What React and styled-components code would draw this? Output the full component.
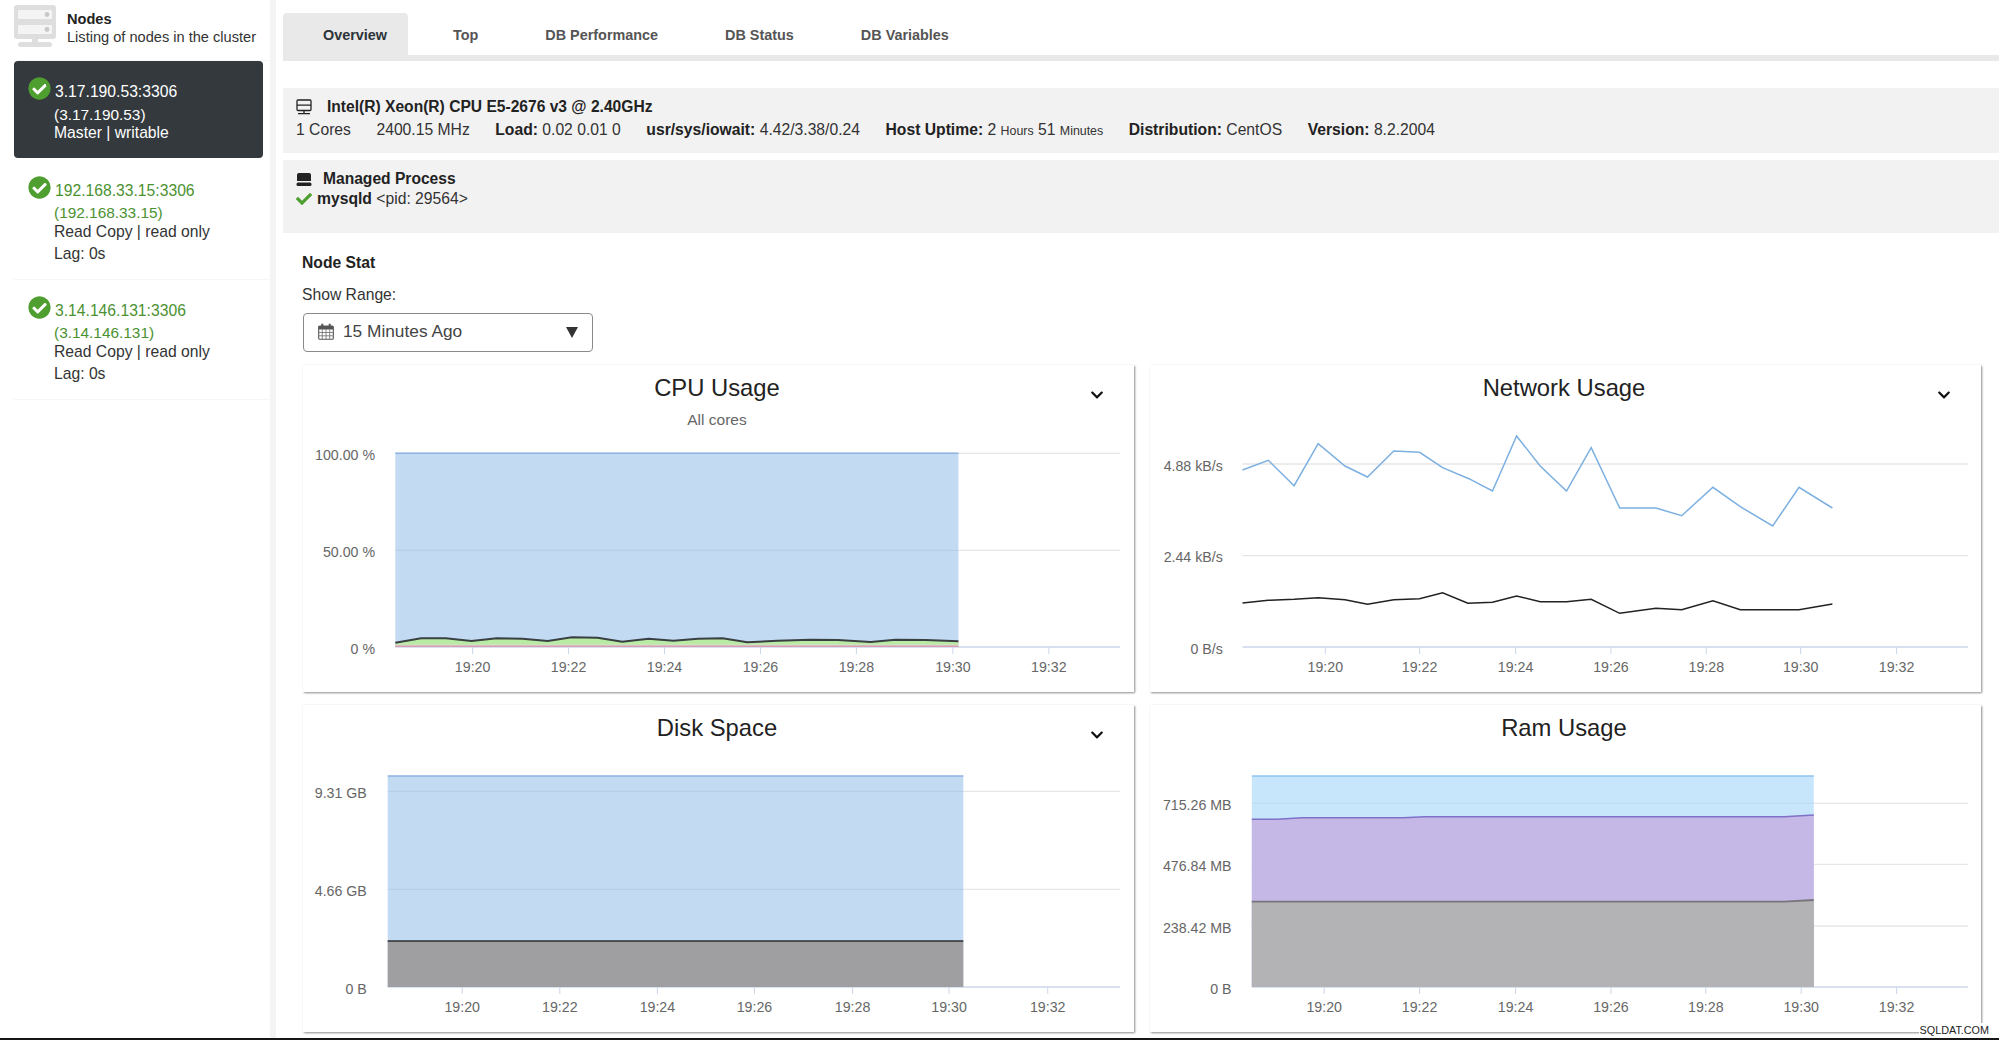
import React from 'react'
import styled, { createGlobalStyle } from 'styled-components'
import { FaCheck, FaCheckCircle, FaChevronDown } from 'react-icons/fa'

const GlobalStyle = createGlobalStyle`
  html, body {
    margin: 0;
    padding: 0;
    background: #fff;
    font-family: "Liberation Sans", Arial, sans-serif;
    color: #222;
  }
  * { box-sizing: border-box; }
`

const Page = styled.div`
  display: flex;
  position: relative;
  width: 1999px;
  height: 1040px;
  overflow: hidden;
  border-bottom: 2px solid #161616;
`

const Sidebar = styled.aside`
  flex: 0 0 276px;
  padding-left: 14px;
  border-right: 6px solid #f4f4f4;
`

const SideHeader = styled.div`
  display: flex;
  gap: 11px;
  height: 61px;
  padding-top: 5px;
  margin-right: -1px;
  border-bottom: 1px solid #f7f7f7;
`

const SideTitle = styled.div`
  padding-top: 5px;
  font-size: 14.6px;
  line-height: 18px;
  color: #333;
  b { display: block; color: #222; font-size: 14.6px; }
`

const Node = styled.div`
  padding: 16px 14px 15px;
  border-bottom: 1px solid #f6f6f6;
  color: #333;
  margin-right: ${p => p.$active ? '7px' : '0'};
  ${p => p.$active && `
    margin-bottom: 2px;
    padding-bottom: 15px;
    background: #33393d;
    border-radius: 4px;
    border-bottom: none;
    color: #fff;
  `}
`

const Address = styled.div`
  display: flex;
  gap: 4px;
  height: 30px;
  line-height: 30px;
  font-size: 15.7px;
  color: ${p => p.$active ? '#fff' : '#4b9231'};
  svg {
    margin-top: 0;
    color: #4f9e30;
    background: radial-gradient(circle, #fff 45%, transparent 48%);
    border-radius: 50%;
  }
`

const Host = styled.div`
  margin-left: 26px;
  font-size: 15.4px;
  line-height: ${p => p.$active ? '16px' : '14px'};
  color: ${p => p.$active ? '#fff' : '#4b9231'};
`

const Role = styled.div`
  margin-left: 26px;
  font-size: 15.7px;
  line-height: ${p => p.$height || '20px'};
`

const Main = styled.main`
  flex: 1;
  min-width: 0;
  padding: 13px 0 0 7px;
`

const TabBar = styled.nav`
  display: flex;
  height: 48px;
  border-bottom: 6px solid #e9e9e9;
`

const Tab = styled.div`
  height: 42px;
  line-height: 44px;
  padding: ${p => p.$active ? '0 21px 0 40px' : '0 22px 0 45px'};
  font-size: 14.4px;
  font-weight: 700;
  color: ${p => p.$active ? '#2c3338' : '#555'};
  background: ${p => p.$active ? '#e9e9e9' : 'transparent'};
  border-radius: 4px 4px 0 0;
`

const Panel = styled.section`
  height: ${p => p.$height};
  margin-top: ${p => p.$top};
  padding: 10px 13px;
  background: #f2f2f2;
  font-size: 15.7px;
  line-height: 18px;
  color: #333;
`

const PanelTitle = styled.div`
  display: flex;
  align-items: center;
  gap: ${p => p.$gap};
  font-weight: 700;
  font-size: 15.6px;
  color: #222;
`

const Facts = styled.div`
  display: flex;
  gap: 25.5px;
  margin-top: 5px;
  white-space: nowrap;
  b { color: #222; }
  small { font-size: 12.4px; }
`

const ProcessRow = styled.div`
  display: flex;
  align-items: center;
  gap: 5px;
  margin-top: 2px;
  b { color: #222; }
  svg { color: #4f9e30; }
`

const Stats = styled.div`
  padding-left: 19px;
`

const StatTitle = styled.div`
  margin-top: 20px;
  font-size: 15.7px;
  font-weight: 700;
  line-height: 20px;
  color: #222;
`

const RangeLabel = styled.div`
  margin-top: 12px;
  font-size: 15.7px;
  line-height: 20px;
  color: #333;
`

const RangeSelect = styled.div`
  display: flex;
  align-items: center;
  gap: 9px;
  width: 290px;
  height: 39px;
  margin: 8px 0 13px 1px;
  padding: 0 14px 2px;
  border: 1px solid #8a8a8a;
  border-radius: 4px;
  font-size: 17.3px;
  color: #444;
`

const Triangle = styled.span`
  margin-left: auto;
  margin-top: 2px;
  width: 0;
  height: 0;
  border-left: 6.5px solid transparent;
  border-right: 6.5px solid transparent;
  border-top: 11px solid #333;
`

const CardGrid = styled.div`
  display: grid;
  grid-template-columns: 831px 831px;
  grid-auto-rows: 327px;
  column-gap: 16px;
  row-gap: 13px;
  margin-left: 1px;
`

const Card = styled.article`
  position: relative;
  display: flex;
  flex-direction: column;
  background: #fff;
  box-shadow: 1px 1px 2px #8c8c8c;
`

const CardHead = styled.header`
  height: 64px;
  padding: 9px 3px 0 0;
  text-align: center;
`

const CardTitle = styled.h3`
  margin: 0;
  font-size: 23.8px;
  font-weight: 400;
  line-height: 28px;
  color: #222;
`

const CardSub = styled.div`
  margin-top: 9px;
  font-size: 15.5px;
  line-height: 17px;
  color: #666;
`

const Menu = styled.span`
  position: absolute;
  top: 23px;
  right: 30px;
  display: flex;
  color: #111;
`

const Watermark = styled.div`
  position: absolute;
  right: 9px;
  bottom: 1px;
  padding: 0 1px;
  font-size: 10.8px;
  line-height: 14px;
  background: #fff;
  color: #222;
`

// the zoom crops the points were read from: 1.824 wide, 3 high
const sx = (z, col) => z / 1.824 - (col === 0 ? 8 : 10)
const sy = z => z / 3 - 69
const line = (pts, col) => pts.map(([x, y]) => `${sx(x, col).toFixed(1)},${sy(y).toFixed(1)}`).join(' ')

const TickLabel = styled.text`
  font-family: "Liberation Sans", Arial, sans-serif;
  font-size: 14.2px;
  fill: #666;
`

const Chart = ({ col, left, right, labelX, yTicks, xTicks, areas = [], lines = [] }) => {
  const base = sy(861)
  return (
    <svg width="831" height="263" viewBox="0 0 831 263">
      {yTicks.map(([label, y]) => (
        <line key={label} x1={sx(left, col)} x2={sx(right, col)} y1={sy(y)} y2={sy(y)}
          stroke={y === 861 ? '#ccd6eb' : '#e6e6e6'} strokeWidth="1.4" />
      ))}
      {xTicks.map(x => (
        <line key={x} x1={sx(x, col)} x2={sx(x, col)} y1={base} y2={base + 7} stroke="#ccd6eb" />
      ))}
      {areas.map(a => (
        <polygon key={a.fill} points={line(a.pts, col)} fill={a.fill} fillOpacity={a.opacity || 1} />
      ))}
      {lines.map(l => (
        <polyline key={l.stroke} points={line(l.pts, col)} fill="none" stroke={l.stroke} strokeWidth={l.width || 1.5} />
      ))}
      {yTicks.map(([label, y]) => (
        <TickLabel key={label} x={sx(labelX, col)} y={sy(y) + 6.5} textAnchor="end">{label}</TickLabel>
      ))}
      {xTicks.map((x, i) => (
        <TickLabel key={x} x={sx(x, col)} y={sy(920) + 5} textAnchor="middle">{`19:${20 + i * 2}`}</TickLabel>
      ))}
    </svg>
  )
}

const cpuLine = [[183, 848], [230, 835], [275, 835], [322, 843], [368, 835], [415, 836], [461, 843], [505, 832], [552, 833], [597, 845], [645, 836], [690, 842], [735, 836], [780, 835], [825, 847], [880, 842], [940, 839], [990, 840], [1050, 846], [1095, 839], [1150, 840], [1210, 844]]
const netUp = [[187, 330], [234, 301], [281, 377], [325, 251], [374, 318], [415, 351], [463, 273], [510, 277], [552, 323], [600, 356], [643, 393], [687, 228], [730, 318], [778, 393], [823, 263], [875, 444], [941, 444], [988, 467], [1045, 382], [1095, 440], [1154, 498], [1202, 382], [1263, 444]]
const netDown = [[187, 729], [234, 721], [281, 718], [325, 713], [374, 719], [415, 733], [463, 719], [510, 716], [552, 698], [598, 730], [643, 727], [687, 708], [730, 725], [778, 725], [823, 718], [875, 760], [941, 745], [988, 749], [1045, 722], [1095, 749], [1154, 749], [1202, 749], [1263, 732]]
const ramUsed = [[204, 358], [250, 358], [296, 353], [480, 353], [520, 350], [1175, 350], [1229, 345]]
const ramBase = [[204, 605], [1175, 605], [1229, 600]]

const ServerIcon = () => (
  <svg width="42" height="44" viewBox="0 0 42 44">
    <rect x="0" y="0" width="42" height="34" rx="3" fill="#dedede" />
    <rect x="4" y="5" width="34" height="9" rx="1" fill="#f4f4f4" />
    <rect x="4" y="20" width="34" height="9" rx="1" fill="#f4f4f4" />
    <circle cx="33" cy="9.5" r="2.4" fill="#c8c8c8" />
    <circle cx="33" cy="24.5" r="2.4" fill="#c8c8c8" />
    <rect x="18" y="34" width="6" height="8" fill="#dedede" />
    <rect x="4" y="37" width="34" height="5" rx="2.5" fill="#dedede" />
  </svg>
)

const CpuIcon = () => (
  <svg width="16" height="16" viewBox="0 0 16 16">
    <rect x="1" y="1" width="14" height="10.5" rx="1" fill="none" stroke="#222" strokeWidth="1.3" />
    <path d="M1 6.2h14M8 11.5v3M2 14.7h12" stroke="#222" strokeWidth="1.3" />
  </svg>
)

const DriveIcon = () => (
  <svg width="16" height="13" viewBox="0 0 16 13">
    <path d="M3 0h10a2 2 0 0 1 2 2v6H1V2a2 2 0 0 1 2-2z" fill="#222" />
    <rect x="0.5" y="9.5" width="15" height="3.5" rx="1.5" fill="#222" />
  </svg>
)

const CalendarIcon = () => (
  <svg width="16" height="17" viewBox="0 0 16 17">
    <rect x="0.7" y="3" width="14.6" height="13.3" rx="1" fill="none" stroke="#555" strokeWidth="1.1" />
    <path d="M0.7 9.5h14.6M0.7 12.8h14.6M4.3 6.5v9.8M8 6.5v9.8M11.7 6.5v9.8" stroke="#777" strokeWidth="0.9" />
    <path d="M4.3 0.8v4M11.7 0.8v4" stroke="#555" strokeWidth="2" />
    <rect x="0.7" y="3" width="14.6" height="3.5" fill="#555" />
  </svg>
)

const nodes = [
  { addr: '192.168.33.15:3306', host: '(192.168.33.15)' },
  { addr: '3.14.146.131:3306', host: '(3.14.146.131)' },
]

const App = () => (
  <Page>
    <GlobalStyle />
    <Sidebar>
      <SideHeader>
        <ServerIcon />
        <SideTitle>
          <b>Nodes</b>
          Listing of nodes in the cluster
        </SideTitle>
      </SideHeader>
      <Node $active>
        <Address $active><FaCheckCircle size={23} />3.17.190.53:3306</Address>
        <Host $active>(3.17.190.53)</Host>
        <Role>Master | writable</Role>
      </Node>
      {nodes.map(n => (
        <Node key={n.addr}>
          <Address><FaCheckCircle size={23} />{n.addr}</Address>
          <Host>{n.host}</Host>
          <Role $height="24px">Read Copy | read only</Role>
          <Role $height="20px">Lag: 0s</Role>
        </Node>
      ))}
    </Sidebar>
    <Main>
      <TabBar>
        <Tab $active>Overview</Tab>
        <Tab>Top</Tab>
        <Tab>DB Performance</Tab>
        <Tab>DB Status</Tab>
        <Tab>DB Variables</Tab>
      </TabBar>
      <Panel $height="65px" $top="27px">
        <PanelTitle $gap="15px"><CpuIcon />Intel(R) Xeon(R) CPU E5-2676 v3 @ 2.40GHz</PanelTitle>
        <Facts>
          <span>1 Cores</span>
          <span>2400.15 MHz</span>
          <span><b>Load:</b> 0.02 0.01 0</span>
          <span><b>usr/sys/iowait:</b> 4.42/3.38/0.24</span>
          <span><b>Host Uptime:</b> 2 <small>Hours</small> 51 <small>Minutes</small></span>
          <span><b>Distribution:</b> CentOS</span>
          <span><b>Version:</b> 8.2.2004</span>
        </Facts>
      </Panel>
      <Panel $height="73px" $top="7px">
        <PanelTitle $gap="11px"><DriveIcon />Managed Process</PanelTitle>
        <ProcessRow><FaCheck size={16} /><span><b>mysqld</b> &lt;pid: 29564&gt;</span></ProcessRow>
      </Panel>
      <Stats>
        <StatTitle>Node Stat</StatTitle>
        <RangeLabel>Show Range:</RangeLabel>
        <RangeSelect>
          <CalendarIcon />
          15 Minutes Ago
          <Triangle />
        </RangeSelect>
        <CardGrid>
          <Card>
            <CardHead>
              <CardTitle>CPU Usage</CardTitle>
              <CardSub>All cores</CardSub>
            </CardHead>
            <Menu><FaChevronDown size={14} /></Menu>
            <Chart
              col={0} left={183} right={1505} labelX={146}
              yTicks={[['100.00 %', 280], ['50.00 %', 571], ['0 %', 861]]}
              xTicks={[324, 499, 674, 849, 1024, 1200, 1375]}
              areas={[
                { fill: '#8fbde8', opacity: 0.55, pts: [[183, 280], [1210, 280], [1210, 861], [183, 861]] },
                { fill: '#b9eba4', pts: [...cpuLine, [1210, 861], [183, 861]] },
                { fill: '#d2e0c8', pts: [[183, 853], [1210, 853], [1210, 861], [183, 861]] },
              ]}
              lines={[
                { stroke: '#8db2e2', pts: [[183, 280], [1210, 280]] },
                { stroke: '#3a3f42', width: 2, pts: cpuLine },
                { stroke: '#dc9cb0', pts: [[183, 859], [1210, 859]] },
              ]}
            />
          </Card>
          <Card>
            <CardHead><CardTitle>Network Usage</CardTitle></CardHead>
            <Menu><FaChevronDown size={14} /></Menu>
            <Chart
              col={1} left={187} right={1510} labelX={151}
              yTicks={[['4.88 kB/s', 312], ['2.44 kB/s', 587], ['0 B/s', 861]]}
              xTicks={[338, 510, 685, 859, 1033, 1205, 1380]}
              lines={[
                { stroke: '#7cb0e0', pts: netUp },
                { stroke: '#222', pts: netDown },
              ]}
            />
          </Card>
          <Card>
            <CardHead><CardTitle>Disk Space</CardTitle></CardHead>
            <Menu><FaChevronDown size={14} /></Menu>
            <Chart
              col={0} left={169} right={1505} labelX={131}
              yTicks={[['9.31 GB', 274], ['4.66 GB', 568], ['0 B', 861]]}
              xTicks={[305, 483, 661, 838, 1017, 1193, 1373]}
              areas={[
                { fill: '#8fbde8', opacity: 0.55, pts: [[169, 228], [1219, 228], [1219, 861], [169, 861]] },
                { fill: '#9f9fa1', pts: [[169, 723], [1219, 723], [1219, 861], [169, 861]] },
              ]}
              lines={[
                { stroke: '#8db2e2', pts: [[169, 228], [1219, 228]] },
                { stroke: '#2a2d30', pts: [[169, 723], [1219, 723]] },
              ]}
            />
          </Card>
          <Card>
            <CardHead><CardTitle>Ram Usage</CardTitle></CardHead>
            <Chart
              col={1} left={204} right={1510} labelX={167}
              yTicks={[['715.26 MB', 310], ['476.84 MB', 493], ['238.42 MB', 678], ['0 B', 861]]}
              xTicks={[336, 510, 685, 859, 1032, 1206, 1380]}
              areas={[
                { fill: '#a5d5f8', opacity: 0.62, pts: [[204, 228], [1229, 228], [1229, 861], [204, 861]] },
                { fill: '#c5b6e6', opacity: 0.96, pts: [...ramUsed, [1229, 861], [204, 861]] },
                { fill: '#b2b2b2', opacity: 0.96, pts: [...ramBase, [1229, 861], [204, 861]] },
              ]}
              lines={[
                { stroke: '#8cc3f2', pts: [[204, 228], [1229, 228]] },
                { stroke: '#7f70c8', pts: ramUsed },
                { stroke: '#77767c', width: 1.8, pts: ramBase },
              ]}
            />
          </Card>
        </CardGrid>
      </Stats>
    </Main>
    <Watermark>SQLDAT.COM</Watermark>
  </Page>
)

export default App
